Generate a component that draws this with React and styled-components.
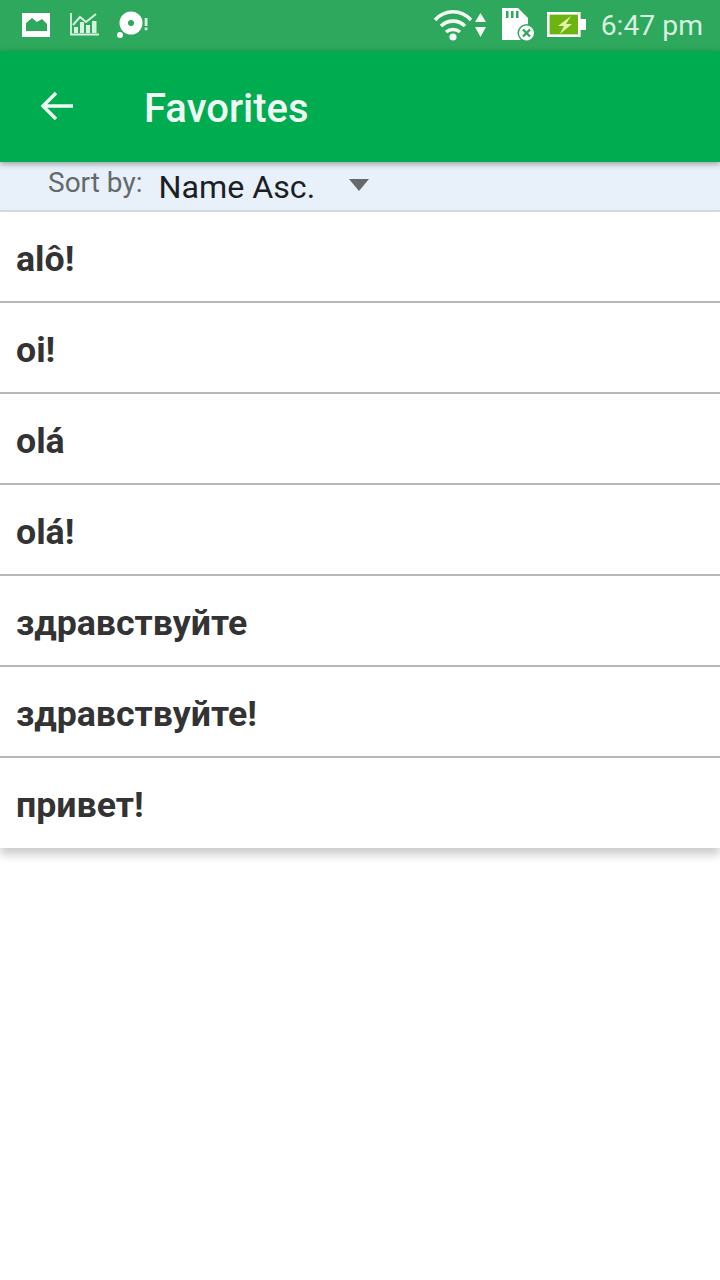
import React from "react";
import styled, { createGlobalStyle } from "styled-components";

const GlobalStyle = createGlobalStyle`
  html, body {
    margin: 0;
    padding: 0;
    background: #fff;
    font-family: Roboto, "Liberation Sans", sans-serif;
  }
`;

const Page = styled.div`
  width: 720px;
  height: 1280px;
  overflow: hidden;
  background: #fff;
`;

const StatusBar = styled.div`
  height: 51px;
  box-sizing: border-box;
  background: #2ea85c;
  display: flex;
  align-items: center;
  justify-content: space-between;
  padding: 0 17px 2px 22px;
`;

const IconGroup = styled.div`
  display: flex;
  align-items: center;
`;

const Clock = styled.span`
  font-size: 28.3px;
  color: #d6efdf;
  margin: 2px 0 0 15px;
`;

const AppBar = styled.header`
  position: relative;
  z-index: 2;
  height: 111px;
  background: #00ac50;
  box-shadow: 0 2px 6px rgba(0, 0, 0, 0.35);
  display: flex;
  align-items: center;
  padding: 0 0 1px 40px;
  box-sizing: border-box;
`;

const BackIcon = styled.svg`
  margin-bottom: 1px;
`;

const Title = styled.h1`
  margin: 4px 0 0 70px;
  font-size: 40px;
  font-weight: 500;
  color: #eefaf3;
`;

const SortBar = styled.div`
  height: 50px;
  box-sizing: border-box;
  background: #e8f1f9;
  border-bottom: 2px solid #d5dadd;
  display: flex;
  align-items: center;
  padding-left: 48px;
`;

const SortLabel = styled.span`
  font-size: 28px;
  color: #66696c;
  margin-bottom: 7px;
`;

const SortValue = styled.span`
  font-size: 32.2px;
  color: #1b1f24;
  margin: 1px 0 0 16px;
  width: 191px;
`;

const Caret = styled.span`
  width: 0;
  height: 0;
  border-left: 10.5px solid transparent;
  border-right: 10.5px solid transparent;
  border-top: 12px solid #66696c;
  margin-bottom: 2px;
`;

const List = styled.ul`
  margin: 0;
  padding: 0;
  list-style: none;
  box-shadow: 0 7px 9px rgba(0, 0, 0, 0.2);
`;

const Item = styled.li`
  height: 91px;
  box-sizing: border-box;
  display: flex;
  align-items: center;
  padding: 5px 0 0 16px;
  font-size: 35.7px;
  font-weight: 700;
  color: #333;
  border-bottom: 2px solid #b8b8b8;
  &:last-child {
    height: 90px;
    padding-top: 4px;
    border-bottom: none;
  }
`;

const words = ["alô!", "oi!", "olá", "olá!", "здравствуйте", "здравствуйте!", "привет!"];

const PictureIcon = styled.svg`
  margin-right: 20px;
`;

const ChartIcon = styled.svg`
  margin-right: 17px;
`;

const ArrowsIcon = styled.svg`
  margin: 0 16px 0 2px;
`;

const BatteryIcon = styled.svg`
  margin-left: 12px;
`;

const App = () => (
  <Page>
    <GlobalStyle />
    <StatusBar>
      <IconGroup>
        <PictureIcon width="28" height="24" viewBox="0 0 28 24">
          <rect width="28" height="24" fill="#fff" />
          <path d="M4 10l6-5 5 4 5-3 5 5v7H4z" fill="#2ea85c" />
        </PictureIcon>
        <ChartIcon width="30" height="23" viewBox="0 0 30 23" fill="none">
          <path d="M1 0v21.5h28" stroke="#d8f0e0" strokeWidth="1.8" />
          <path d="M3 12l7-8 6 5 10-8" stroke="#d8f0e0" strokeWidth="2" />
          <path d="M4 14h4v6H4zM10 9h4v11h-4zM16 12h4v8h-4zM22 8h4.5v12H22z" fill="#d8f0e0" />
        </ChartIcon>
        <svg width="31" height="27" viewBox="0 0 31 27">
          <circle cx="14" cy="12" r="11.5" fill="#fff" />
          <circle cx="14" cy="12" r="3" fill="#2ea85c" />
          <circle cx="3" cy="24" r="3" fill="#fff" />
          <path d="M27.7 7h2.8v8h-2.8zM27.7 16.5h2.8v2.8h-2.8z" fill="#d8f0e0" />
        </svg>
      </IconGroup>
      <IconGroup>
        <svg width="40" height="32" viewBox="0 0 40 32" fill="none" stroke="#f4fbf6" strokeWidth="3.6">
          <path d="M2 11C12 0 28 0 38 11" />
          <path d="M8 17c7-6.5 17-6.5 24 0" />
          <path d="M13 23c4-3.4 10-3.4 14 0" />
          <circle cx="20" cy="28" r="3.6" fill="#f4fbf6" stroke="none" />
        </svg>
        <ArrowsIcon width="11" height="24" viewBox="0 0 11 24">
          <path d="M5.5 0l5.5 9H0zM5.5 24L11 14H0z" fill="#f4fbf6" />
        </ArrowsIcon>
        <svg width="33" height="33" viewBox="0 0 33 33">
          <path d="M0 0h16l10 10v22H0z" fill="#fff" />
          <path d="M4 3h2.5v7H4zM9 3h2.5v7H9zM14 3h2.5v7H14z" fill="#2ea85c" />
          <circle cx="24.5" cy="25" r="9" fill="#2ea85c" />
          <circle cx="24.5" cy="25" r="7.5" fill="#fff" />
          <path d="M21 21.5l7 7M28 21.5l-7 7" stroke="#2ea85c" strokeWidth="2.4" />
        </svg>
        <BatteryIcon width="39" height="25" viewBox="0 0 39 25">
          <rect x="1.3" y="1.3" width="31" height="22.4" fill="#6cb412" stroke="#fff" strokeWidth="2.6" />
          <rect x="33" y="7" width="6" height="11" fill="#fff" />
          <path d="M24 4L11 14h6l-4 8 12-10h-6z" fill="#e6f5a8" />
        </BatteryIcon>
        <Clock>6:47 pm</Clock>
      </IconGroup>
    </StatusBar>
    <AppBar>
      <BackIcon width="34" height="30" viewBox="0 0 34 30" fill="none" stroke="#eefaf3" strokeWidth="3.4">
        <path d="M33 15H3M16 2L3 15l13 13" />
      </BackIcon>
      <Title>Favorites</Title>
    </AppBar>
    <SortBar>
      <SortLabel>Sort by:</SortLabel>
      <SortValue>Name Asc.</SortValue>
      <Caret />
    </SortBar>
    <List>
      {words.map((word, i) => (
        <Item key={i}>{word}</Item>
      ))}
    </List>
  </Page>
);

export default App;
